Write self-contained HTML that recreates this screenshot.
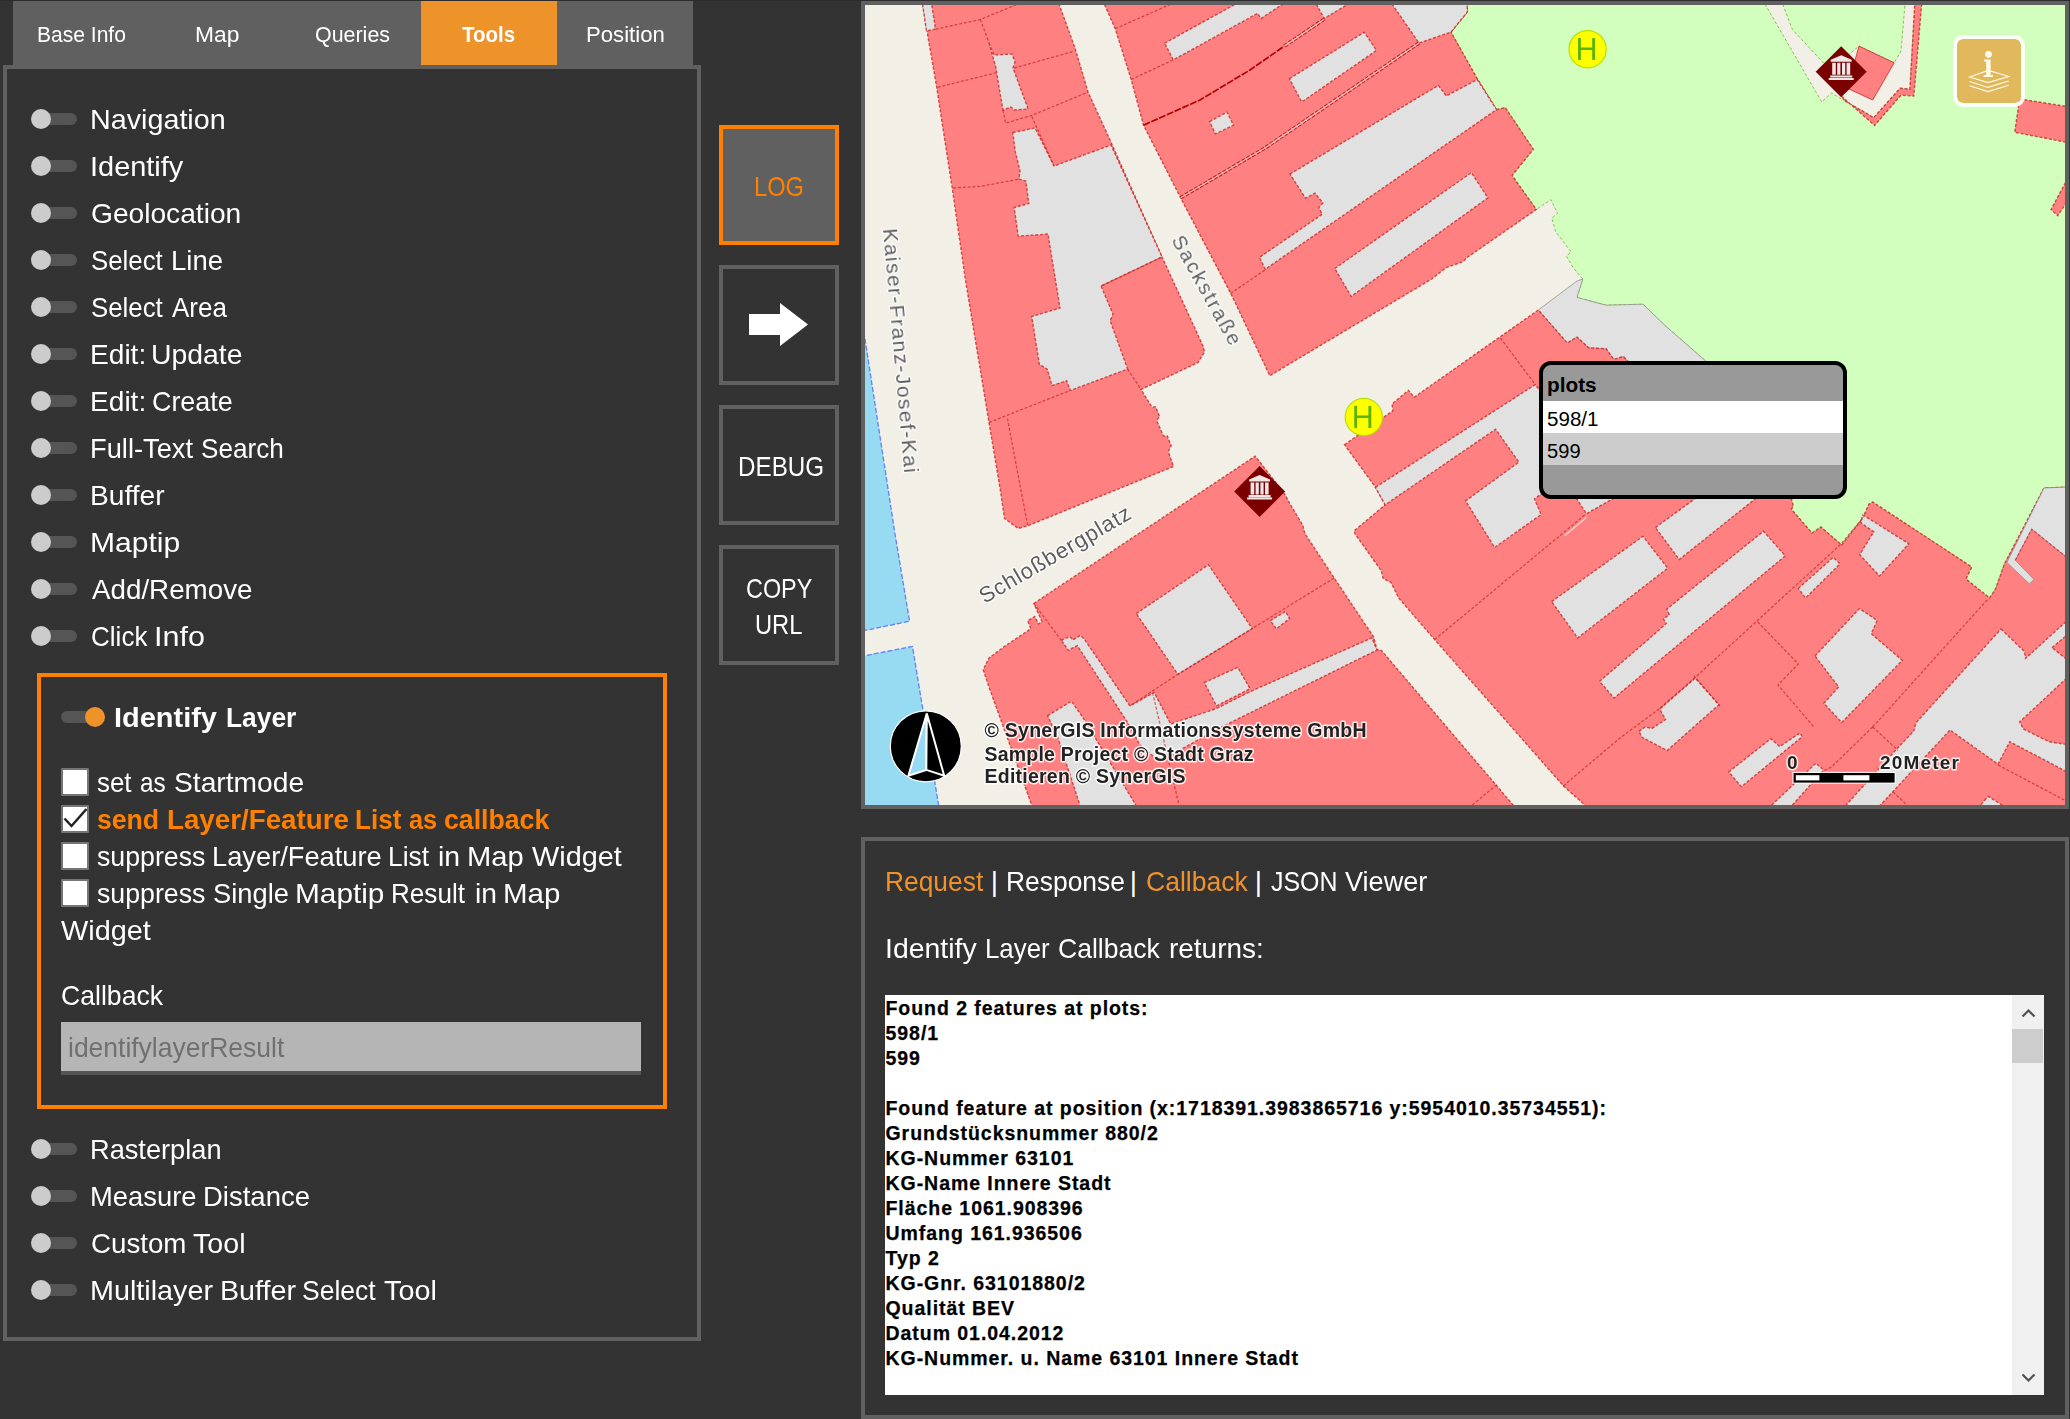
<!DOCTYPE html>
<html><head><meta charset="utf-8"><title>WebGIS API Tester</title>
<style>
html,body{margin:0;padding:0;}
body{width:2070px;height:1419px;background:#333;overflow:hidden;position:relative;font-family:"Liberation Sans",sans-serif;}
div{box-sizing:border-box;}
.a{position:absolute;}
.t{position:absolute;white-space:nowrap;line-height:1;transform-origin:0 0;}
.trk{position:absolute;left:37px;width:40px;height:12px;border-radius:6px;background:#555;}
.knob{position:absolute;left:31px;width:20px;height:20px;border-radius:10px;background:#cccccc;}
.btn{position:absolute;left:719px;width:120px;height:120px;border:4px solid #606060;}
.cb{position:absolute;left:61px;width:28px;height:28px;background:#fff;border:2px solid #767676;border-radius:1px;}
.ln{position:absolute;left:0.5px;-webkit-text-stroke:0.25px #000;white-space:nowrap;font-size:19.5px;font-weight:700;letter-spacing:0.95px;line-height:25px;color:#000;}
</style></head><body>
<!-- tab bar -->
<div class="a" style="left:13px;top:1px;width:680px;height:64px;background:#606060"></div>
<div class="a" style="left:421px;top:1px;width:136px;height:64px;background:#ee922a"></div>
<!-- left panel -->
<div class="a" style="left:3px;top:65px;width:698px;height:1276px;border:4px solid #606060"></div>
<div class="trk" style="top:113px"></div><div class="knob" style="top:109px"></div>
<div class="trk" style="top:160px"></div><div class="knob" style="top:156px"></div>
<div class="trk" style="top:207px"></div><div class="knob" style="top:203px"></div>
<div class="trk" style="top:254px"></div><div class="knob" style="top:250px"></div>
<div class="trk" style="top:301px"></div><div class="knob" style="top:297px"></div>
<div class="trk" style="top:348px"></div><div class="knob" style="top:344px"></div>
<div class="trk" style="top:395px"></div><div class="knob" style="top:391px"></div>
<div class="trk" style="top:442px"></div><div class="knob" style="top:438px"></div>
<div class="trk" style="top:489px"></div><div class="knob" style="top:485px"></div>
<div class="trk" style="top:536px"></div><div class="knob" style="top:532px"></div>
<div class="trk" style="top:583px"></div><div class="knob" style="top:579px"></div>
<div class="trk" style="top:630px"></div><div class="knob" style="top:626px"></div>
<div class="trk" style="top:1143px"></div><div class="knob" style="top:1139px"></div>
<div class="trk" style="top:1190px"></div><div class="knob" style="top:1186px"></div>
<div class="trk" style="top:1237px"></div><div class="knob" style="top:1233px"></div>
<div class="trk" style="top:1284px"></div><div class="knob" style="top:1280px"></div>
<!-- identify layer box -->
<div class="a" style="left:37px;top:673px;width:630px;height:436px;border:4px solid #ff8000"></div>
<div class="a" style="left:61px;top:711px;width:40px;height:12px;border-radius:6px;background:#555"></div>
<div class="a" style="left:85px;top:707px;width:20px;height:20px;border-radius:10px;background:#ee922a"></div>
<div class="cb" style="top:768px"></div>
<div class="cb" style="top:805px"></div>
<div class="cb" style="top:842px"></div>
<div class="cb" style="top:879px"></div>
<svg class="a" style="left:61px;top:805px" width="28" height="28" viewBox="0 0 28 28"><path d="M3.5 13.5 L10.5 21 L25.5 4" fill="none" stroke="#222" stroke-width="2.5"/></svg>
<div class="a" style="left:61px;top:1022px;width:580px;height:53px;background:#b5b5b5;border-bottom:4px solid #555"></div>
<!-- buttons -->
<div class="btn" style="top:125px;border-color:#ff8000;background:#606060"></div>
<div class="btn" style="top:265px"></div>
<div class="btn" style="top:405px"></div>
<div class="btn" style="top:545px"></div>
<svg class="a" style="left:719px;top:265px" width="120" height="120" viewBox="0 0 120 120"><path d="M30 49 H61 V38 L89 59.5 L61 81 V70 H30 Z" fill="#fff"/></svg>
<!-- map container -->
<div class="a" style="left:0;top:0;width:2070px;height:1px;background:#2c2c2c"></div>
<div class="a" style="left:861px;top:1px;width:1208px;height:808px;border:4px solid #606060;background:#f2efe6"></div>
<svg class="a" style="left:865px;top:5px" width="1200" height="800" viewBox="865 5 1200 800">
<defs><filter id="soft" x="0" y="0" width="100%" height="100%"><feGaussianBlur stdDeviation="0.7"/></filter></defs>
<rect x="860" y="0" width="1215" height="815" fill="#f2efe6"/>
<g filter="url(#soft)">
<polygon points="860.0,311.2 865.0,339.0 895.0,534.0 909.6,621.2 860.0,631.5" fill="#97dbf2" stroke="#3c5cff" stroke-width="1.3" stroke-opacity="0.72" stroke-dasharray="5 2"/>
<polygon points="860.0,656.6 912.5,646.4 938.6,805.0 939.0,812.0 860.0,812.0" fill="#97dbf2" stroke="#3c5cff" stroke-width="1.3" stroke-opacity="0.72" stroke-dasharray="5 2"/>
<polygon points="1466.6,0.0 2070.0,0.0 2070.0,487.0 2044.0,488.0 2004.4,564.0 1995.5,589.0 1989.6,598.0 1965.9,579.0 1971.8,567.0 1872.7,502.0 1868.8,504.3 1862.9,518.0 1841.7,545.0 1821.0,527.0 1812.0,533.0 1791.4,509.2 1793.3,506.3 1791.4,498.8 1750.0,440.0 1706.0,361.3 1665.0,325.5 1643.0,304.2 1606.0,305.2 1577.0,297.4 1582.8,279.0 1573.1,267.6 1566.4,256.0 1571.2,252.0 1555.7,231.7 1551.8,218.1 1557.6,213.3 1550.9,199.7 1536.3,209.4 1512.1,175.5 1533.4,149.3 1505.3,107.7 1496.6,109.6 1477.2,78.6 1451.0,32.1 1467.5,11.8" fill="#d3ffbe" stroke="#66aa22" stroke-width="1" stroke-opacity="0.72" stroke-dasharray="3 2"/>
<polygon points="1538.3,310.0 1577.0,281.0 1582.8,279.0 1577.0,297.4 1606.0,305.2 1643.0,304.2 1665.0,325.5 1706.0,361.3 1750.0,440.0 1700.0,440.0 1623.5,356.5 1613.8,359.4 1606.1,348.8 1588.6,347.8 1577.0,337.1 1567.3,343.0" fill="#e1e1e1" stroke="#888" stroke-width="1" stroke-opacity="0.72"/>
<polygon points="922.0,0.0 1057.5,0.0 1059.0,4.0 1075.0,48.0 1088.0,92.0 1110.0,140.0 1162.0,257.0 1203.0,346.0 1204.5,352.0 1198.0,362.5 1141.0,389.5 1151.8,406.9 1155.7,406.9 1159.6,416.6 1156.7,420.5 1163.4,436.0 1167.3,436.0 1171.2,445.7 1168.3,451.5 1173.5,466.5 1028.5,525.5 1018.3,528.5 1004.5,518.5 1000.7,492.2 989.0,422.4 965.3,279.0 952.2,188.0 936.7,87.3 927.0,31.0" fill="#ff8080" stroke="#c41a1a" stroke-width="1.4" stroke-opacity="0.72" stroke-dasharray="3 1.8"/>
<polygon points="922.0,0.0 931.0,0.0 935.5,29.0 926.5,31.0" fill="#e1e1e1" stroke="#c41a1a" stroke-width="1.4" stroke-opacity="0.72" stroke-dasharray="3 1.8"/>
<polygon points="989.0,43.0 994.0,55.0 1012.0,54.0 1015.0,62.0 1013.0,68.0 1027.0,106.0 1028.0,109.0 1014.0,110.0 1011.0,107.0 1003.0,110.0 999.0,87.0 996.0,68.0" fill="#e1e1e1" stroke="#c41a1a" stroke-width="1.4" stroke-opacity="0.72" stroke-dasharray="3 1.8"/>
<polygon points="1012.8,132.5 1035.0,128.0 1054.0,166.0 1111.0,145.0 1162.0,257.0 1101.0,286.0 1113.0,314.0 1110.2,320.7 1127.6,369.1 1070.4,390.4 1066.6,380.7 1052.0,385.6 1047.2,369.1 1039.4,364.3 1031.7,316.5 1060.0,308.0 1048.0,234.0 1018.2,236.2 1014.2,207.5 1028.8,203.6 1025.9,181.0 1019.0,179.0 1020.0,170.7 1015.2,151.3" fill="#e1e1e1" stroke="#c41a1a" stroke-width="1.4" stroke-opacity="0.72" stroke-dasharray="3 1.8"/>
<polyline points="935.7,29.2 980.3,19.5 1018.0,4.0" fill="none" stroke="#c41a1a" stroke-width="1.3" stroke-opacity="0.62" stroke-dasharray="3 1.8"/>
<polyline points="980.3,19.5 989.0,42.8" fill="none" stroke="#c41a1a" stroke-width="1.3" stroke-opacity="0.62" stroke-dasharray="3 1.8"/>
<polyline points="1003.0,110.0 1005.5,123.2 1031.7,115.4 1087.9,92.2" fill="none" stroke="#c41a1a" stroke-width="1.3" stroke-opacity="0.62" stroke-dasharray="3 1.8"/>
<polyline points="937.7,87.3 995.8,72.8" fill="none" stroke="#c41a1a" stroke-width="1.3" stroke-opacity="0.62" stroke-dasharray="3 1.8"/>
<polyline points="1014.2,68.0 1073.3,51.5" fill="none" stroke="#c41a1a" stroke-width="1.3" stroke-opacity="0.62" stroke-dasharray="3 1.8"/>
<polyline points="953.2,188.0 981.3,186.2 1018.0,179.4" fill="none" stroke="#c41a1a" stroke-width="1.3" stroke-opacity="0.62" stroke-dasharray="3 1.8"/>
<polyline points="1031.7,116.4 1054.0,165.8" fill="none" stroke="#c41a1a" stroke-width="1.3" stroke-opacity="0.62" stroke-dasharray="3 1.8"/>
<polyline points="989.0,422.4 1070.4,390.4" fill="none" stroke="#c41a1a" stroke-width="1.3" stroke-opacity="0.62" stroke-dasharray="3 1.8"/>
<polyline points="1127.6,369.1 1141.2,389.5" fill="none" stroke="#c41a1a" stroke-width="1.3" stroke-opacity="0.62" stroke-dasharray="3 1.8"/>
<polyline points="1007.4,418.5 1027.8,526.1" fill="none" stroke="#c41a1a" stroke-width="1.3" stroke-opacity="0.62" stroke-dasharray="3 1.8"/>
<polyline points="1101.0,286.0 1162.0,257.0" fill="none" stroke="#c41a1a" stroke-width="1.3" stroke-opacity="0.62" stroke-dasharray="3 1.8"/>
<polygon points="1102.9,0.0 1104.3,4.0 1115.2,28.7 1131.2,79.5 1143.5,125.2 1180.6,197.8 1231.3,294.4 1269.8,375.7 1431.7,279.0 1446.2,267.6 1462.7,261.8 1466.6,257.9 1536.3,209.4 1512.1,175.5 1533.4,149.3 1505.3,107.7 1496.6,109.6 1477.2,78.6 1451.0,32.1 1467.5,11.8 1466.6,0.0" fill="#ff8080" stroke="#c41a1a" stroke-width="1.4" stroke-opacity="0.72" stroke-dasharray="3 1.8"/>
<polygon points="1164.6,43.2 1235.7,4.0 1243.0,0.0 1290.0,0.0 1282.9,4.0 1261.1,18.5 1257.5,13.4 1173.3,59.9" fill="#e1e1e1" stroke="#c41a1a" stroke-width="1.4" stroke-opacity="0.72" stroke-dasharray="3 1.8"/>
<polygon points="1314.0,0.0 1316.3,4.0 1324.2,18.5 1348.2,4.0 1355.0,0.0" fill="#e1e1e1" stroke="#c41a1a" stroke-width="1.4" stroke-opacity="0.72" stroke-dasharray="3 1.8"/>
<polygon points="1389.0,0.0 1392.0,4.0 1419.0,43.0 1451.0,32.1 1467.5,11.8 1466.6,0.0" fill="#e1e1e1" stroke="#c41a1a" stroke-width="1.4" stroke-opacity="0.72" stroke-dasharray="3 1.8"/>
<polygon points="1289.4,78.7 1364.2,32.3 1376.5,50.4 1301.7,102.0" fill="#e1e1e1" stroke="#c41a1a" stroke-width="1.4" stroke-opacity="0.72" stroke-dasharray="3 1.8"/>
<polygon points="1209.6,121.6 1227.0,112.1 1233.5,125.2 1215.4,133.9" fill="#e1e1e1" stroke="#c41a1a" stroke-width="1.4" stroke-opacity="0.72" stroke-dasharray="3 1.8"/>
<polygon points="1290.0,174.0 1438.4,85.4 1446.2,96.0 1477.2,79.6 1496.6,109.6 1265.3,269.2 1259.4,257.4 1322.2,214.3 1318.8,207.5 1323.0,203.0 1315.0,193.2 1305.5,198.2" fill="#e1e1e1" stroke="#c41a1a" stroke-width="1.4" stroke-opacity="0.72" stroke-dasharray="3 1.8"/>
<polygon points="1334.8,268.5 1471.4,172.6 1487.9,197.8 1351.2,296.4" fill="#e1e1e1" stroke="#c41a1a" stroke-width="1.4" stroke-opacity="0.72" stroke-dasharray="3 1.8"/>
<polyline points="1419.0,43.0 1265.0,148.0 1180.6,197.8" fill="none" stroke="#c41a1b" stroke-width="3.4" stroke-dasharray="4 1.5"/>
<polyline points="1419.0,43.0 1265.0,148.0 1180.6,197.8" fill="none" stroke="#f2cccc" stroke-width="1.3"/>
<polyline points="1324.2,19.2 1284.3,46.1" fill="none" stroke="#c41a1b" stroke-width="3.4" stroke-dasharray="4 1.5"/>
<polyline points="1324.2,19.2 1284.3,46.1" fill="none" stroke="#f2cccc" stroke-width="1.3"/>
<polyline points="1143.5,125.2 1200.0,100.0 1250.0,70.0 1284.3,46.1" fill="none" stroke="#b00000" stroke-width="1.7" stroke-dasharray="7 1.5"/>
<polyline points="1115.2,28.7 1169.7,4.7" fill="none" stroke="#c41a1a" stroke-width="1.3" stroke-opacity="0.62" stroke-dasharray="3 1.8"/>
<polyline points="1131.2,79.5 1173.3,59.9" fill="none" stroke="#c41a1a" stroke-width="1.3" stroke-opacity="0.62" stroke-dasharray="3 1.8"/>
<polyline points="1230.5,293.5 1265.3,269.8" fill="none" stroke="#c41a1a" stroke-width="1.3" stroke-opacity="0.62" stroke-dasharray="3 1.8"/>
<polygon points="1033.8,603.4 1255.1,456.2 1260.1,462.3 1284.5,493.8 1290.6,505.0 1302.8,525.3 1304.8,533.4 1334.2,578.0 1373.5,636.7 1377.0,649.5 1381.3,650.3 1513.1,805.0 1518.0,812.0 1034.0,812.0 1031.7,805.0 989.0,687.1 983.2,669.7 989.0,658.0 1004.5,646.4 1030.8,628.8 1027.7,620.7 1034.8,616.6 1038.5,624.0 1042.0,621.5" fill="#ff8080" stroke="#c41a1a" stroke-width="1.4" stroke-opacity="0.72" stroke-dasharray="3 1.8"/>
<polygon points="1136.3,613.6 1208.4,564.8 1252.3,628.6 1177.9,674.4" fill="#e1e1e1" stroke="#c41a1a" stroke-width="1.4" stroke-opacity="0.72" stroke-dasharray="3 1.8"/>
<polygon points="1270.3,620.7 1285.5,611.5 1289.6,618.6 1276.4,628.8" fill="#e1e1e1" stroke="#c41a1a" stroke-width="1.4" stroke-opacity="0.72" stroke-dasharray="3 1.8"/>
<polygon points="1204.3,682.6 1237.8,667.4 1250.0,688.7 1216.5,705.9" fill="#e1e1e1" stroke="#c41a1a" stroke-width="1.4" stroke-opacity="0.72" stroke-dasharray="3 1.8"/>
<polygon points="1061.3,640.3 1069.6,636.5 1073.0,639.9 1080.3,635.5 1084.2,638.9 1129.9,706.0 1154.2,692.4 1170.7,724.0 1216.5,708.5 1250.0,691.7 1371.8,637.9 1376.9,650.1 1219.5,728.0 1180.0,750.0 1160.0,762.0 1140.0,745.0 1127.0,721.5 1077.4,645.7 1073.0,647.6 1068.6,650.6" fill="#e1e1e1" stroke="#c41a1a" stroke-width="1.4" stroke-opacity="0.72" stroke-dasharray="3 1.8"/>
<polygon points="1047.7,715.7 1071.5,701.1 1084.2,719.6 1140.0,812.0 1082.0,812.0 1076.0,793.0 1058.0,738.0" fill="#e1e1e1" stroke="#c41a1a" stroke-width="1.4" stroke-opacity="0.72" stroke-dasharray="3 1.8"/>
<polyline points="1334.2,578.0 1175.9,675.5 1129.9,706.0" fill="none" stroke="#c41a1a" stroke-width="1.3" stroke-opacity="0.62" stroke-dasharray="3 1.8"/>
<polyline points="1033.8,603.4 1061.3,640.3" fill="none" stroke="#c41a1a" stroke-width="1.3" stroke-opacity="0.62" stroke-dasharray="3 1.8"/>
<polyline points="1152.6,692.7 1179.0,805.0" fill="none" stroke="#c41a1a" stroke-width="1.3" stroke-opacity="0.62" stroke-dasharray="3 1.8"/>
<polygon points="1344.5,444.7 1392.9,410.8 1392.0,404.0 1408.4,390.4 1414.2,397.2 1538.3,310.0 1567.3,343.0 1577.0,337.1 1588.6,347.8 1606.1,348.8 1613.8,359.4 1623.5,356.5 1700.0,440.0 1791.4,498.8 1793.3,506.3 1791.4,509.2 1812.0,533.0 1821.0,527.0 1841.7,545.0 1862.9,518.0 1868.8,504.3 1872.7,502.0 1971.8,567.0 1965.9,579.0 1989.6,598.0 1995.5,589.0 2004.4,564.0 2044.0,488.0 2070.0,487.0 2070.0,812.0 1590.0,812.0 1584.8,805.0 1563.4,785.9 1434.6,639.6 1398.7,598.0 1391.0,582.4 1383.2,578.6 1381.3,570.8 1355.1,534.0 1354.1,530.9 1385.2,504.8 1375.5,487.3" fill="#ff8080" stroke="#c41a1a" stroke-width="1.4" stroke-opacity="0.72" stroke-dasharray="3 1.8"/>
<polygon points="1375.5,487.3 1535.3,384.6 1545.0,398.0 1600.0,400.0 1600.0,490.0 1541.2,494.0 1534.4,499.0 1541.2,514.5 1494.7,547.4 1465.6,500.9 1518.9,462.1 1495.6,429.2 1385.2,504.8" fill="#e1e1e1" stroke="#c41a1a" stroke-width="1.4" stroke-opacity="0.72" stroke-dasharray="3 1.8"/>
<polygon points="1576.3,498.0 1586.4,513.8 1614.0,498.0" fill="#e1e1e1" stroke="#c41a1a" stroke-width="1.4" stroke-opacity="0.72" stroke-dasharray="3 1.8"/>
<polygon points="1551.6,601.6 1643.0,536.3 1667.7,568.2 1577.7,637.9" fill="#e1e1e1" stroke="#c41a1a" stroke-width="1.4" stroke-opacity="0.72" stroke-dasharray="3 1.8"/>
<polygon points="1655.4,527.6 1700.0,495.0 1760.0,495.0 1679.3,559.5" fill="#e1e1e1" stroke="#c41a1a" stroke-width="1.4" stroke-opacity="0.72" stroke-dasharray="3 1.8"/>
<polygon points="1599.5,681.4 1646.0,641.5 1666.3,623.4 1663.4,619.0 1669.2,614.7 1667.0,608.9 1763.5,531.2 1785.3,555.9 1614.0,698.1 1606.0,688.7" fill="#e1e1e1" stroke="#c41a1a" stroke-width="1.4" stroke-opacity="0.72" stroke-dasharray="3 1.8"/>
<polygon points="1798.3,588.5 1833.2,557.3 1840.0,563.9 1805.6,598.0" fill="#e1e1e1" stroke="#c41a1a" stroke-width="1.4" stroke-opacity="0.72" stroke-dasharray="3 1.8"/>
<polygon points="1862.5,515.1 1866.0,516.8 1908.8,543.8 1879.5,576.0 1859.7,554.6 1873.8,531.8 1860.9,523.0" fill="#e1e1e1" stroke="#c41a1a" stroke-width="1.4" stroke-opacity="0.72" stroke-dasharray="3 1.8"/>
<polygon points="1815.0,655.9 1859.4,608.6 1877.2,620.4 1871.3,633.7 1902.3,660.4 1841.7,722.5 1823.9,703.3 1838.7,687.0" fill="#e1e1e1" stroke="#c41a1a" stroke-width="1.4" stroke-opacity="0.72" stroke-dasharray="3 1.8"/>
<polygon points="1639.0,731.4 1645.0,727.0 1652.0,728.4 1665.6,719.5 1659.7,709.2 1695.2,678.1 1718.9,704.7 1667.1,750.6 1642.0,737.3" fill="#e1e1e1" stroke="#c41a1a" stroke-width="1.4" stroke-opacity="0.72" stroke-dasharray="3 1.8"/>
<polygon points="1728.7,772.0 1770.8,738.7 1779.6,746.6 1800.2,732.9 1802.1,736.8 1741.4,786.7" fill="#e1e1e1" stroke="#c41a1a" stroke-width="1.4" stroke-opacity="0.72" stroke-dasharray="3 1.8"/>
<polygon points="1765.0,812.0 1771.8,805.0 1815.9,763.2 1823.7,770.1 1792.4,805.0 1786.0,812.0" fill="#e1e1e1" stroke="#c41a1a" stroke-width="1.4" stroke-opacity="0.72" stroke-dasharray="3 1.8"/>
<polygon points="2001.0,629.0 2024.5,651.6 2025.5,658.4 2070.0,618.0 2070.0,773.5 2009.8,741.7 1998.0,764.2 1950.0,730.0 1880.5,805.0 1874.0,812.0 1840.0,812.0 1846.2,805.0 1897.2,748.5 1913.8,731.0 1915.8,723.0" fill="#e1e1e1" stroke="#c41a1a" stroke-width="1.4" stroke-opacity="0.72" stroke-dasharray="3 1.8"/>
<polygon points="2052.0,647.6 2070.0,632.5 2070.0,662.0" fill="#ff8080" stroke="#c41a1a" stroke-width="1.4" stroke-opacity="0.72" stroke-dasharray="3 1.8"/>
<polygon points="2070.0,675.0 2019.6,722.0 2023.5,729.0 2049.0,741.7 2070.0,745.0" fill="#ff8080" stroke="#c41a1a" stroke-width="1.4" stroke-opacity="0.72" stroke-dasharray="3 1.8"/>
<polygon points="1984.4,800.5 1988.3,796.5 2002.0,805.0 2010.0,812.0 1975.0,812.0" fill="#e1e1e1" stroke="#c41a1a" stroke-width="1.4" stroke-opacity="0.72" stroke-dasharray="3 1.8"/>
<polygon points="2044.0,488.0 2070.0,487.0 2070.0,560.0 2031.7,529.2 2015.3,560.2 2033.9,579.4 2029.4,583.9 2006.9,562.4" fill="#e1e1e1" stroke="#888" stroke-width="1" stroke-opacity="0.72"/>
<polygon points="2031.7,529.2 2070.0,560.0 2070.0,600.0" fill="#ff8080"/>
<polyline points="2015.3,560.2 2031.7,529.2 2070.0,560.0" fill="none" stroke="#c41a1a" stroke-width="1.3" stroke-opacity="0.62" stroke-dasharray="3 1.8"/>
<polyline points="1500.5,338.1 1535.3,384.6" fill="none" stroke="#c41a1a" stroke-width="1.3" stroke-opacity="0.62" stroke-dasharray="3 1.8"/>
<polyline points="1434.6,639.6 1586.0,514.0" fill="none" stroke="#c41a1a" stroke-width="1.3" stroke-opacity="0.62" stroke-dasharray="3 1.8"/>
<polyline points="1564.7,535.6 1586.4,517.4" fill="none" stroke="#f0cccc" stroke-width="1.4"/>
<polyline points="1563.4,785.9 1620.0,738.0 1659.5,708.6 1695.0,677.6 1840.0,545.0 1863.8,516.9" fill="none" stroke="#c41a1a" stroke-width="1.3" stroke-opacity="0.62" stroke-dasharray="3 1.8"/>
<polyline points="1472.4,805.0 1497.6,784.0" fill="none" stroke="#c41a1a" stroke-width="1.3" stroke-opacity="0.62" stroke-dasharray="3 1.8"/>
<polyline points="1693.8,675.6 1720.0,706.0" fill="none" stroke="#c41a1a" stroke-width="1.3" stroke-opacity="0.62" stroke-dasharray="3 1.8"/>
<polyline points="1757.7,621.9 1798.3,664.0 1778.0,685.0 1813.9,727.0" fill="none" stroke="#c41a1a" stroke-width="1.3" stroke-opacity="0.62" stroke-dasharray="3 1.8"/>
<polyline points="1872.7,727.0 1988.3,598.7" fill="none" stroke="#c41a1a" stroke-width="1.3" stroke-opacity="0.62" stroke-dasharray="3 1.8"/>
<polyline points="1872.7,727.0 1831.5,767.0 1824.0,770.5" fill="none" stroke="#c41a1a" stroke-width="1.3" stroke-opacity="0.62" stroke-dasharray="3 1.8"/>
<polyline points="1893.0,792.0 1908.0,806.0" fill="none" stroke="#c41a1a" stroke-width="1.3" stroke-opacity="0.62" stroke-dasharray="3 1.8"/>
<polyline points="1872.7,727.0 1898.0,750.5" fill="none" stroke="#c41a1a" stroke-width="1.3" stroke-opacity="0.62" stroke-dasharray="3 1.8"/>
<polyline points="1998.0,765.0 2070.0,803.0" fill="none" stroke="#c41a1a" stroke-width="1.3" stroke-opacity="0.62" stroke-dasharray="3 1.8"/>
<polygon points="1762.0,0.0 1764.9,4.0 1821.7,102.0 1831.5,93.1 1873.7,117.6 1900.1,88.2 1909.9,89.2 1914.8,4.0 1915.0,0.0" fill="#f2efe6" stroke="#66aa22" stroke-width="1" stroke-opacity="0.72" stroke-dasharray="3 2"/>
<polygon points="1780.0,0.0 1782.6,4.0 1792.4,29.5 1830.0,70.0 1859.0,46.1 1894.2,62.8 1901.0,51.0 1905.0,4.0 1905.3,0.0" fill="#d3ffbe" stroke="#66aa22" stroke-width="1" stroke-opacity="0.72" stroke-dasharray="3 2"/>
<polygon points="1841.3,96.1 1874.6,125.5 1901.1,95.1 1913.8,96.1 1921.7,4.0 1922.0,0.0 1915.0,0.0 1914.8,4.0 1909.9,89.2 1900.1,88.2 1873.7,117.6 1845.0,101.0" fill="#ff8080" stroke="#c41a1a" stroke-width="1.4" stroke-opacity="0.72" stroke-dasharray="3 1.8"/>
<polygon points="1859.0,46.1 1894.2,62.8 1872.7,100.0 1847.2,88.2" fill="#ff8080" stroke="#c41a1a" stroke-width="1" stroke-opacity="0.72"/>
<polygon points="2019.6,99.0 2070.0,107.0 2070.0,143.0 2014.7,132.3" fill="#ff8080" stroke="#c41a1a" stroke-width="1.4" stroke-opacity="0.72" stroke-dasharray="3 1.8"/>
<polygon points="2070.0,174.0 2051.0,209.7 2057.8,215.6 2070.0,197.0" fill="#ff8080" stroke="#c41a1a" stroke-width="1.4" stroke-opacity="0.72" stroke-dasharray="3 1.8"/>
</g>
<g filter="url(#soft)">
<!-- street labels -->
<g font-family="Liberation Sans, sans-serif" fill="#5c5c5c" stroke="#fff" stroke-width="2.5" paint-order="stroke" stroke-linejoin="round">
<text transform="translate(984.5,604) rotate(-30.2)" font-size="22" letter-spacing="0.9">Schloßbergplatz</text>
<text transform="translate(1171,240) rotate(61)" font-size="20.5" letter-spacing="2.05">Sackstraße</text>
<text transform="translate(883,229) rotate(85)" font-size="21" letter-spacing="1.45">Kaiser-Franz-Josef-Kai</text>
</g>
<!-- bus stops -->
<g font-family="Liberation Sans, sans-serif" font-size="30.5" fill="#5cb400" text-anchor="middle">
<circle cx="1587.6" cy="49.2" r="18.6" fill="#ffff00" stroke="#b8e000" stroke-width="1.2"/><text x="1586.6" y="60">H</text>
<circle cx="1363.8" cy="417" r="18.6" fill="#ffff00" stroke="#b8e000" stroke-width="1.2"/><text x="1362.7" y="427.8">H</text>
</g>
<!-- museum diamonds -->
<g transform="translate(1841.2,71.8)">
<polygon points="-25.5,0 0,-25.5 25.5,0 0,25.5" fill="#7a0000"/>
<path d="M-10.5,-12 L0,-16.5 L10.5,-12 L10.5,-10 L-10.5,-10 Z M-9,-9 h3.6 v12 h-3.6z M-4,-9 h3.2 v12 h-3.2z M0.8,-9 h3.2 v12 h-3.2z M5.4,-9 h3.6 v12 h-3.6z M-11,3.6 h22 v2.2 h-22z M-12.5,6.2 h25 v2 h-25z" fill="#f3e6e6"/>
</g>
<g transform="translate(1259.6,491.4)">
<polygon points="-25.5,0 0,-25.5 25.5,0 0,25.5" fill="#7a0000"/>
<path d="M-10.5,-12 L0,-16.5 L10.5,-12 L10.5,-10 L-10.5,-10 Z M-9,-9 h3.6 v12 h-3.6z M-4,-9 h3.2 v12 h-3.2z M0.8,-9 h3.2 v12 h-3.2z M5.4,-9 h3.6 v12 h-3.6z M-11,3.6 h22 v2.2 h-22z M-12.5,6.2 h25 v2 h-25z" fill="#f3e6e6"/>
</g>
<!-- north arrow -->
<circle cx="925.8" cy="746.3" r="35.5" fill="#000" stroke="#fff" stroke-width="1.2"/>
<polygon points="926.8,713.5 908.4,775.8 926.3,769.9" fill="#97dbf2" stroke="#fff" stroke-width="2" stroke-linejoin="miter"/>
<polygon points="926.8,713.5 926.3,769.9 944.2,775.8" fill="#000" stroke="#fff" stroke-width="2" stroke-linejoin="miter"/>
<!-- copyright -->
<g font-family="Liberation Sans, sans-serif" font-weight="700" font-size="19.5" fill="#222" stroke="#fff" stroke-opacity="0.85" stroke-width="3" paint-order="stroke" stroke-linejoin="round">
<text x="984.5" y="737" textLength="382" lengthAdjust="spacing">© SynerGIS Informationssysteme GmbH</text>
<text x="984.5" y="760.5" textLength="269" lengthAdjust="spacing">Sample Project © Stadt Graz</text>
<text x="984.5" y="782.5" textLength="201" lengthAdjust="spacing">Editieren © SynerGIS</text>
<text x="1787" y="768.8" font-size="19">0</text>
<text x="1880" y="768.8" font-size="19" textLength="79" lengthAdjust="spacing">20Meter</text>
</g>
<!-- scale bar -->
<rect x="1792.3" y="771.8" width="103.4" height="12" fill="#fff" fill-opacity="0.8"/>
<rect x="1793.6" y="773" width="101" height="9.6" fill="#000"/>
<rect x="1795.8" y="775.2" width="23.6" height="5.2" fill="#fff"/>
<rect x="1843.4" y="775.2" width="26" height="5.2" fill="#fff"/>

</g>
</svg>
<!-- info button -->
<div class="a" style="left:1953px;top:35px;width:72px;height:72px;border-radius:10px;background:#e2b85c;background-clip:padding-box;border:4px solid rgba(255,255,255,0.9)"></div>
<svg class="a" style="left:1953px;top:35px" width="72" height="72" viewBox="1953 35 72 72"><circle cx="1988.5" cy="54.3" r="3.4" fill="#fffbe8"/><path d="M1984,59.5 h6.6 v15.5 h2.4 v2 h-9.4 v-2 h2.6 v-13.5 h-2.2 z" fill="#fffbe8"/><g fill="none" stroke="#fffbe8" stroke-width="1.1"><path d="M1969.6,77 L1988.4,70.4 L2008.7,76.5 L1988,82.6 Z"/><path d="M1969.6,81.5 L1988,87.4 L2008.7,81"/><path d="M1969.6,85.7 L1988,91.6 L2008.7,85.2"/></g></svg>
<!-- popup -->
<div class="a" style="left:1539px;top:361px;width:308px;height:138px;border:4px solid #000;border-radius:12px;background:#999;overflow:hidden">
<div class="a" style="left:0;top:35.6px;width:300px;height:32.7px;background:#fff"></div>
<div class="a" style="left:0;top:68.3px;width:300px;height:31.9px;background:#ccc"></div>
</div>

<!-- bottom panel -->
<div class="a" style="left:861px;top:837px;width:1208px;height:582px;border:4px solid #606060"></div>
<div class="a" style="left:885px;top:995px;width:1159px;height:400px;background:#fff;overflow:hidden">
<div class="ln" style="top:0.5px">Found 2 features at plots:</div>
<div class="ln" style="top:25.5px">598/1</div>
<div class="ln" style="top:50.5px">599</div>
<div class="ln" style="top:100.5px">Found feature at position (x:1718391.3983865716 y:5954010.35734551):</div>
<div class="ln" style="top:125.5px">Grundstücksnummer 880/2</div>
<div class="ln" style="top:150.5px">KG-Nummer 63101</div>
<div class="ln" style="top:175.5px">KG-Name Innere Stadt</div>
<div class="ln" style="top:200.5px">Fläche 1061.908396</div>
<div class="ln" style="top:225.5px">Umfang 161.936506</div>
<div class="ln" style="top:250.5px">Typ 2</div>
<div class="ln" style="top:275.5px">KG-Gnr. 63101880/2</div>
<div class="ln" style="top:300.5px">Qualität BEV</div>
<div class="ln" style="top:325.5px">Datum 01.04.2012</div>
<div class="ln" style="top:350.5px">KG-Nummer. u. Name 63101 Innere Stadt</div>
<div class="a" style="right:0;top:0;width:32px;height:400px;background:#f0f0f0"></div>
<div class="a" style="right:1px;top:34px;width:31px;height:34px;background:#cdcdcd"></div>
<svg class="a" style="right:0;top:0" width="32" height="400" viewBox="0 0 32 400"><path d="M10.5 21.5 L16.5 15.5 L22.5 21.5" fill="none" stroke="#505050" stroke-width="2.2"/><path d="M10.5 379.5 L16.5 385.5 L22.5 379.5" fill="none" stroke="#505050" stroke-width="2.2"/></svg>
</div>
<div class="t" style="left:36.74px;top:24.08px;font-size:22px;color:#fff;transform:scaleX(0.9565);">Base Info</div>
<div class="t" style="left:194.76px;top:24.08px;font-size:22px;color:#fff;transform:scaleX(1.0366);">Map</div>
<div class="t" style="left:314.83px;top:24.08px;font-size:22px;color:#fff;transform:scaleX(0.9737);">Queries</div>
<div class="t" style="left:462.30px;top:24.08px;font-size:22px;color:#fff;font-weight:700;transform:scaleX(0.9298);">Tools</div>
<div class="t" style="left:585.79px;top:24.08px;font-size:22px;color:#fff;transform:scaleX(1.0066);">Position</div>
<div class="t" style="left:90.05px;top:106.30px;font-size:28px;color:#fff;transform:scaleX(1.0256);">Navigation</div>
<div class="t" style="left:90.03px;top:153.30px;font-size:28px;color:#fff;transform:scaleX(1.0337);">Identify</div>
<div class="t" style="left:91.09px;top:200.30px;font-size:28px;color:#fff;transform:scaleX(1.0054);">Geolocation</div>
<div class="t" style="left:91.18px;top:247.30px;font-size:28px;color:#fff;transform:scaleX(0.9221);">Select</div>
<div class="t" style="left:170.94px;top:247.30px;font-size:28px;color:#fff;transform:scaleX(0.9820);">Line</div>
<div class="t" style="left:91.18px;top:294.30px;font-size:28px;color:#fff;transform:scaleX(0.9221);">Select</div>
<div class="t" style="left:172.30px;top:294.30px;font-size:28px;color:#fff;transform:scaleX(0.9300);">Area</div>
<div class="t" style="left:90.29px;top:341.30px;font-size:28px;color:#fff;transform:scaleX(1.0038);">Edit:</div>
<div class="t" style="left:150.67px;top:341.30px;font-size:28px;color:#fff;transform:scaleX(1.0136);">Update</div>
<div class="t" style="left:90.29px;top:388.30px;font-size:28px;color:#fff;transform:scaleX(1.0038);">Edit:</div>
<div class="t" style="left:151.74px;top:388.30px;font-size:28px;color:#fff;transform:scaleX(0.9598);">Create</div>
<div class="t" style="left:90.35px;top:435.30px;font-size:28px;color:#fff;transform:scaleX(0.9740);">Full-Text</div>
<div class="t" style="left:201.07px;top:435.30px;font-size:28px;color:#fff;transform:scaleX(0.9333);">Search</div>
<div class="t" style="left:90.09px;top:482.30px;font-size:28px;color:#fff;transform:scaleX(1.0056);">Buffer</div>
<div class="t" style="left:89.95px;top:529.30px;font-size:28px;color:#fff;transform:scaleX(1.0728);">Maptip</div>
<div class="t" style="left:92.10px;top:576.30px;font-size:28px;color:#fff;transform:scaleX(0.9913);">Add/Remove</div>
<div class="t" style="left:91.17px;top:623.30px;font-size:28px;color:#fff;transform:scaleX(0.9300);">Click</div>
<div class="t" style="left:154.22px;top:623.30px;font-size:28px;color:#fff;transform:scaleX(1.0909);">Info</div>
<div class="t" style="left:90.16px;top:1136.30px;font-size:28px;color:#fff;transform:scaleX(0.9712);">Rasterplan</div>
<div class="t" style="left:90.35px;top:1183.30px;font-size:28px;color:#fff;transform:scaleX(0.9774);">Measure</div>
<div class="t" style="left:203.14px;top:1183.30px;font-size:28px;color:#fff;transform:scaleX(0.9821);">Distance</div>
<div class="t" style="left:91.11px;top:1230.30px;font-size:28px;color:#fff;transform:scaleX(0.9894);">Custom</div>
<div class="t" style="left:193.20px;top:1230.30px;font-size:28px;color:#fff;transform:scaleX(1.0220);">Tool</div>
<div class="t" style="left:90.25px;top:1277.30px;font-size:28px;color:#fff;transform:scaleX(1.0271);">Multilayer</div>
<div class="t" style="left:219.95px;top:1277.30px;font-size:28px;color:#fff;transform:scaleX(1.0236);">Buffer</div>
<div class="t" style="left:302.15px;top:1277.30px;font-size:28px;color:#fff;transform:scaleX(0.9455);">Select</div>
<div class="t" style="left:383.60px;top:1277.30px;font-size:28px;color:#fff;transform:scaleX(1.0280);">Tool</div>
<div class="t" style="left:114.47px;top:704.30px;font-size:28px;color:#fff;font-weight:700;transform:scaleX(1.0343);">Identify</div>
<div class="t" style="left:226.16px;top:704.30px;font-size:28px;color:#fff;font-weight:700;transform:scaleX(0.9405);">Layer</div>
<div class="t" style="left:96.58px;top:769.30px;font-size:28px;color:#fff;transform:scaleX(0.9243);">set</div>
<div class="t" style="left:140.33px;top:769.30px;font-size:28px;color:#fff;transform:scaleX(0.8679);">as</div>
<div class="t" style="left:173.59px;top:769.30px;font-size:28px;color:#fff;transform:scaleX(1.0071);">Startmode</div>
<div class="t" style="left:96.85px;top:806.30px;font-size:28px;color:#ff8000;font-weight:700;transform:scaleX(0.9508);">send</div>
<div class="t" style="left:166.81px;top:806.30px;font-size:28px;color:#ff8000;font-weight:700;transform:scaleX(0.9907);">Layer/Feature</div>
<div class="t" style="left:354.67px;top:806.30px;font-size:28px;color:#ff8000;font-weight:700;transform:scaleX(0.9306);">List</div>
<div class="t" style="left:409.00px;top:806.30px;font-size:28px;color:#ff8000;font-weight:700;transform:scaleX(0.9033);">as</div>
<div class="t" style="left:444.25px;top:806.30px;font-size:28px;color:#ff8000;font-weight:700;transform:scaleX(0.9527);">callback</div>
<div class="t" style="left:96.55px;top:843.30px;font-size:28px;color:#fff;transform:scaleX(0.9545);">suppress</div>
<div class="t" style="left:211.85px;top:843.30px;font-size:28px;color:#fff;transform:scaleX(0.9738);">Layer/Feature</div>
<div class="t" style="left:387.81px;top:843.30px;font-size:28px;color:#fff;transform:scaleX(0.9429);">List</div>
<div class="t" style="left:438.39px;top:843.30px;font-size:28px;color:#fff;transform:scaleX(1.0150);">in</div>
<div class="t" style="left:467.12px;top:843.30px;font-size:28px;color:#fff;transform:scaleX(1.0404);">Map</div>
<div class="t" style="left:532.40px;top:843.30px;font-size:28px;color:#fff;transform:scaleX(1.0310);">Widget</div>
<div class="t" style="left:96.55px;top:880.30px;font-size:28px;color:#fff;transform:scaleX(0.9545);">suppress</div>
<div class="t" style="left:212.83px;top:880.30px;font-size:28px;color:#fff;transform:scaleX(0.9750);">Single</div>
<div class="t" style="left:295.27px;top:880.30px;font-size:28px;color:#fff;transform:scaleX(1.0642);">Maptip</div>
<div class="t" style="left:391.24px;top:880.30px;font-size:28px;color:#fff;transform:scaleX(0.9321);">Result</div>
<div class="t" style="left:474.99px;top:880.30px;font-size:28px;color:#fff;transform:scaleX(1.0100);">in</div>
<div class="t" style="left:503.29px;top:880.30px;font-size:28px;color:#fff;transform:scaleX(1.0538);">Map</div>
<div class="t" style="left:61.30px;top:917.30px;font-size:28px;color:#fff;transform:scaleX(1.0310);">Widget</div>
<div class="t" style="left:60.85px;top:982.30px;font-size:28px;color:#fff;transform:scaleX(0.9505);">Callback</div>
<div class="t" style="left:68.35px;top:1034.30px;font-size:28px;color:#707070;transform:scaleX(0.9452);">identifylayerResult</div>
<div class="t" style="left:754.11px;top:172.80px;font-size:28px;color:#ff8000;transform:scaleX(0.8429);">LOG</div>
<div class="t" style="left:738.07px;top:452.80px;font-size:28px;color:#fff;transform:scaleX(0.8646);">DEBUG</div>
<div class="t" style="left:745.87px;top:574.80px;font-size:28px;color:#fff;transform:scaleX(0.8346);">COPY</div>
<div class="t" style="left:755.11px;top:610.80px;font-size:28px;color:#fff;transform:scaleX(0.8463);">URL</div>
<div class="t" style="left:1546.96px;top:374.97px;font-size:20px;color:#000;font-weight:700;transform:scaleX(1.0383);">plots</div>
<div class="t" style="left:1547.27px;top:409.17px;font-size:20px;color:#000;transform:scaleX(1.0286);">598/1</div>
<div class="t" style="left:1547.29px;top:441.07px;font-size:20px;color:#000;transform:scaleX(1.0063);">599</div>
<div class="t" style="left:885.12px;top:868.30px;font-size:28px;color:#f0922b;transform:scaleX(0.9417);">Request</div>
<div class="t" style="left:990.80px;top:868.30px;font-size:28px;color:#fff;">|</div>
<div class="t" style="left:1006.11px;top:868.30px;font-size:28px;color:#fff;transform:scaleX(0.9431);">Response</div>
<div class="t" style="left:1129.80px;top:868.30px;font-size:28px;color:#fff;">|</div>
<div class="t" style="left:1146.35px;top:868.30px;font-size:28px;color:#f0922b;transform:scaleX(0.9486);">Callback</div>
<div class="t" style="left:1254.80px;top:868.30px;font-size:28px;color:#fff;">|</div>
<div class="t" style="left:1270.50px;top:868.30px;font-size:28px;color:#fff;transform:scaleX(0.8904);">JSON</div>
<div class="t" style="left:1345.00px;top:868.30px;font-size:28px;color:#fff;transform:scaleX(0.9682);">Viewer</div>
<div class="t" style="left:884.97px;top:935.30px;font-size:28px;color:#fff;transform:scaleX(1.0146);">Identify</div>
<div class="t" style="left:984.56px;top:935.30px;font-size:28px;color:#fff;transform:scaleX(0.9221);">Layer</div>
<div class="t" style="left:1057.65px;top:935.30px;font-size:28px;color:#fff;transform:scaleX(0.9486);">Callback</div>
<div class="t" style="left:1168.80px;top:935.30px;font-size:28px;color:#fff;transform:scaleX(0.9978);">returns:</div>
</body></html>
